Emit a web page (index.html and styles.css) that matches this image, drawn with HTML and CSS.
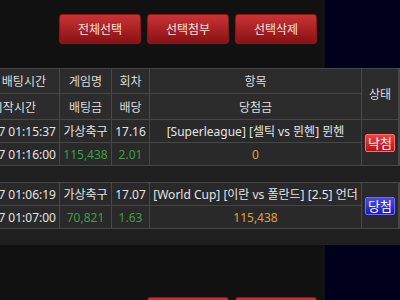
FILE: index.html
```html
<!DOCTYPE html>
<html lang="ko">
<head>
<meta charset="utf-8">
<title>배팅내역</title>
<link rel="stylesheet" href="styles.css">
</head>
<body>
<div class="page">
  <div class="toolbar">
    <button class="btn">전체선택</button>
    <button class="btn">선택첨부</button>
    <button class="btn">선택삭제</button>
  </div>
  <div class="board">
    <div class="grid head">
      <div class="cell hc c1 r1">배팅시간</div>
      <div class="cell hc">게임명</div>
      <div class="cell hc">회차</div>
      <div class="cell hc">항목</div>
      <div class="cell hc span2">상태</div>
      <div class="cell hc c1 r2">시작시간</div>
      <div class="cell hc">배팅금</div>
      <div class="cell hc">배당</div>
      <div class="cell hc">당첨금</div>
    </div>
    <div class="grid bet">
      <div class="cell c1 dt">2018-06-17 01:15:37</div>
      <div class="cell">가상축구</div>
      <div class="cell">17.16</div>
      <div class="cell">[Superleague] [셀틱 vs 뮌헨] 뮌헨</div>
      <div class="cell span2"><span class="badge lose">낙첨</span></div>
      <div class="cell c1 dt">2018-06-17 01:16:00</div>
      <div class="cell green">115,438</div>
      <div class="cell green">2.01</div>
      <div class="cell orange">0</div>
    </div>
    <div class="grid bet">
      <div class="cell c1 dt">2018-06-17 01:06:19</div>
      <div class="cell">가상축구</div>
      <div class="cell">17.07</div>
      <div class="cell">[World Cup] [이란 vs 폴란드] [2.5] 언더</div>
      <div class="cell span2"><span class="badge win">당첨</span></div>
      <div class="cell c1 dt">2018-06-17 01:07:00</div>
      <div class="cell green">70,821</div>
      <div class="cell green">1.63</div>
      <div class="cell orange">115,438</div>
    </div>
  </div>
  <div class="toolbar bottom">
    <button class="btn">선택첨부</button>
    <button class="btn">선택삭제</button>
  </div>
</div>
</body>
</html>
```
FILE: styles.css
```css
html, body {
  margin: 0;
  padding: 0;
}
body {
  width: 400px;
  height: 300px;
  overflow: hidden;
  background: #00001c;
  font-family: "Noto Sans", "Noto Sans CJK KR", sans-serif;
  font-size: 12px;
  color: #e4e4e4;
}
.page {
  width: 325px;
  min-height: 300px;
  background: #111111;
}
.toolbar {
  display: flex;
  justify-content: flex-end;
  gap: 6px;
  padding: 14px 8px 0 0;
}
.toolbar.bottom {
  padding-top: 52px;
}
.btn {
  width: 82px;
  height: 30px;
  border: 1px solid #8e1618;
  border-radius: 3px;
  background: linear-gradient(#c93335, #8a1014);
  color: #f5e2e2;
  font-family: "Noto Sans", "Noto Sans CJK KR", sans-serif;
  font-size: 12px;
  padding: 0;
}
.board {
  margin-top: 24px;
  width: 400px;
  background: #1f1f1f;
  padding-bottom: 16px;
}
.grid {
  display: grid;
  grid-template-columns: 138px 51px 37px 211px 36px;
  gap: 1px;
  margin-left: -80px;
  background: #474747;
  padding: 1px;
}
.head {
  grid-template-rows: 24px 25px;
  padding-bottom: 0;
}
.bet {
  grid-template-rows: 22px 22px;
}
.bet + .bet {
  margin-top: 16px;
}
.cell {
  display: flex;
  align-items: center;
  justify-content: center;
  background: #292929;
  white-space: nowrap;
  overflow: hidden;
}
.hc {
  background: #2c2c2c;
  color: #dedede;
}
.span2 {
  grid-row: span 2;
}
.c1 {
  justify-content: flex-end;
}
.c1.r1 {
  padding-right: 13px;
}
.c1.r2 {
  padding-right: 23px;
}
.c1.dt {
  padding-right: 3px;
}
.green {
  color: #3e9e46;
}
.orange {
  color: #e0a030;
}
.badge {
  display: inline-flex;
  align-items: center;
  justify-content: center;
  width: 28px;
  height: 16px;
  border-radius: 2px;
  color: #ffffff;
  font-size: 13px;
}
.lose {
  background: linear-gradient(#f04242, #b51313);
  border: 1px solid #ff6a6a;
}
.win {
  background: linear-gradient(#4a4af0, #1b1bb8);
  border: 1px solid #6a6aff;
}
```
